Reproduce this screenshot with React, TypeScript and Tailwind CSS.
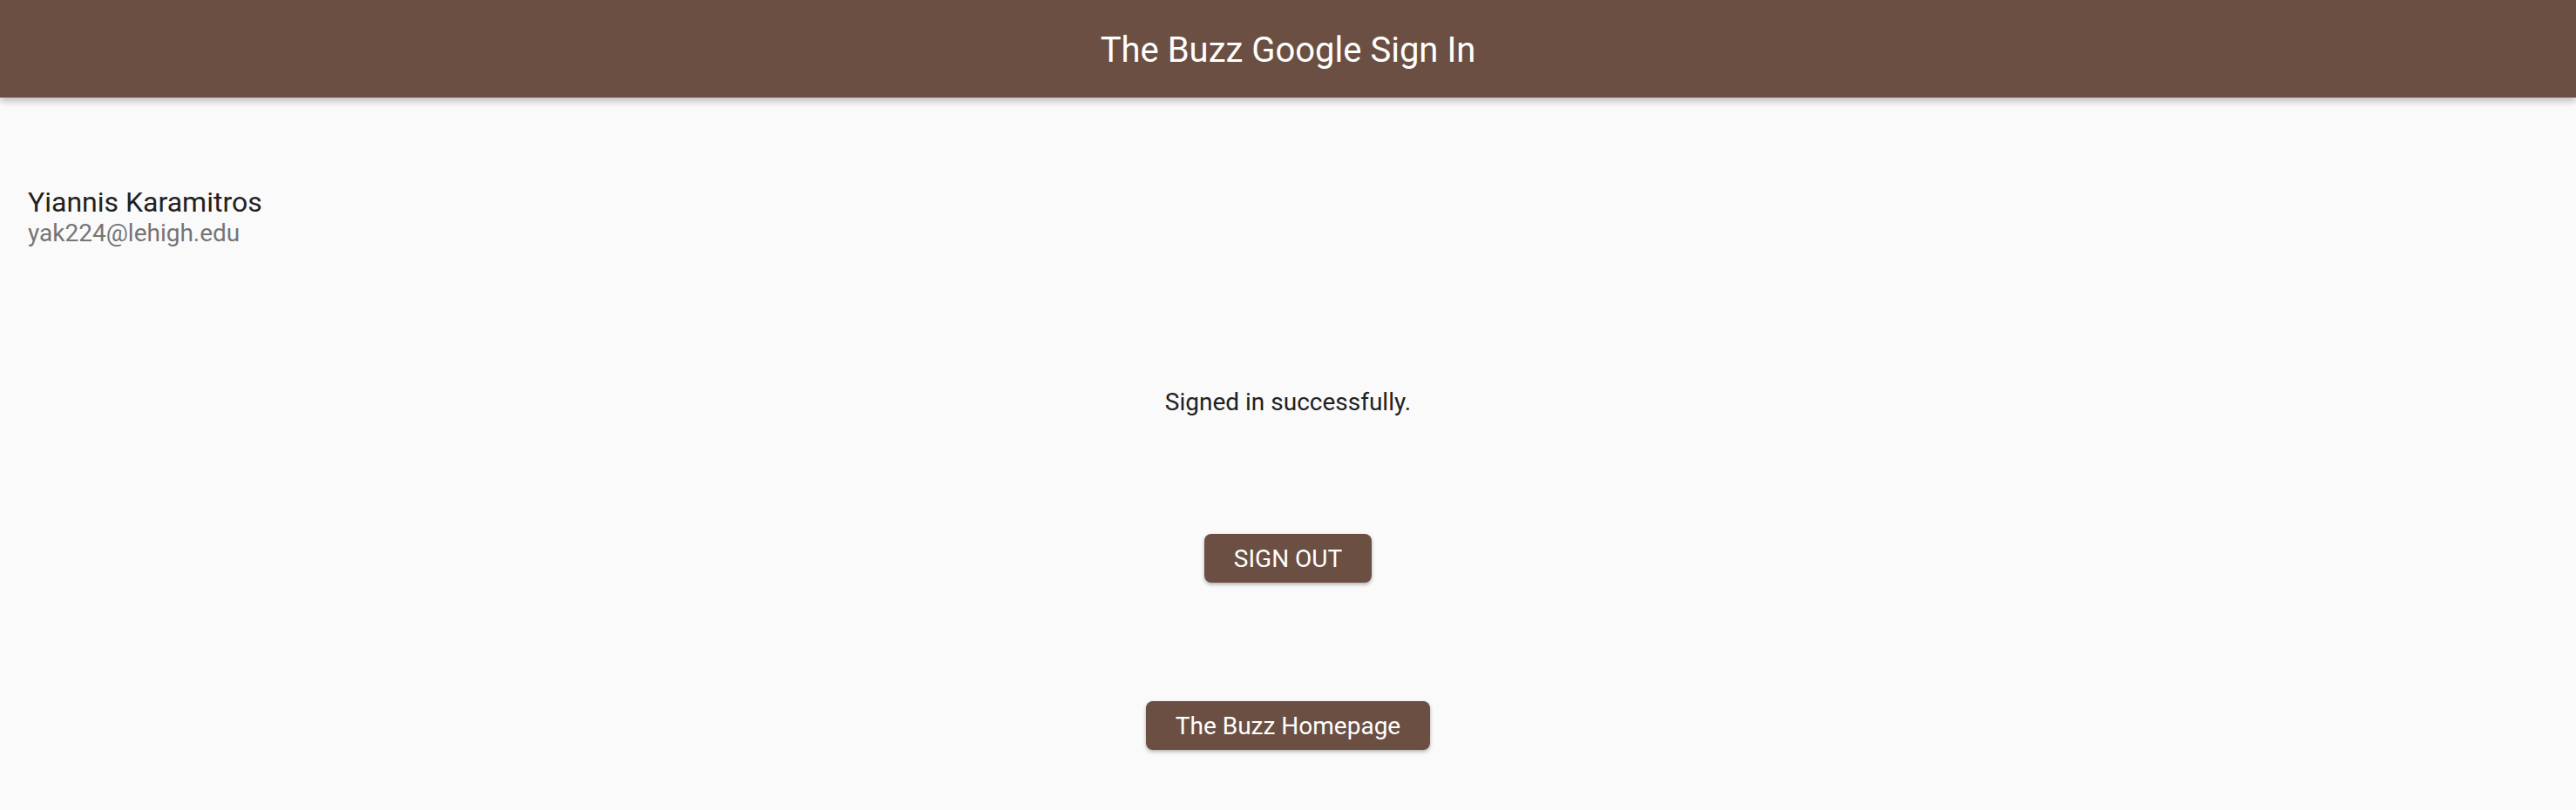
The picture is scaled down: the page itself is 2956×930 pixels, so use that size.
export default function App() {
    return (
        <div className="min-h-[930px] bg-[#fafafa] font-['Roboto',sans-serif]">
            <header className="relative z-10 flex h-[112px] items-center justify-center bg-[#6b4f43] pt-[3px] shadow-[0_4px_8px_rgba(0,0,0,0.25)]">
                <h1 className="text-[40px] leading-none font-normal text-white">
                    The Buzz Google Sign In
                </h1>
            </header>

            <section className="mt-[100px] pl-8">
                <div className="text-[32px] leading-[40px] text-[#212121]">
                    Yiannis Karamitros
                </div>
                <div className="text-[28px] leading-[32px] text-[#757575]">
                    yak224@lehigh.edu
                </div>
            </section>

            <div className="flex flex-col items-center">
                <p className="mt-[162px] text-[28px] leading-[32px] text-[#212121]">
                    Signed in successfully.
                </p>

                <button className="mt-[135px] flex h-[56px] items-center rounded-lg bg-[#6b4f43] px-[34px] pt-[2px] text-[28px] font-normal text-white shadow-[0_2px_4px_rgba(0,0,0,0.3)]">
                    SIGN OUT
                </button>

                <button className="mt-[136px] flex h-[56px] items-center rounded-lg bg-[#6b4f43] px-[34px] pt-[2px] text-[28px] font-normal text-white shadow-[0_2px_4px_rgba(0,0,0,0.3)]">
                    The Buzz Homepage
                </button>
            </div>
        </div>
    );
}
